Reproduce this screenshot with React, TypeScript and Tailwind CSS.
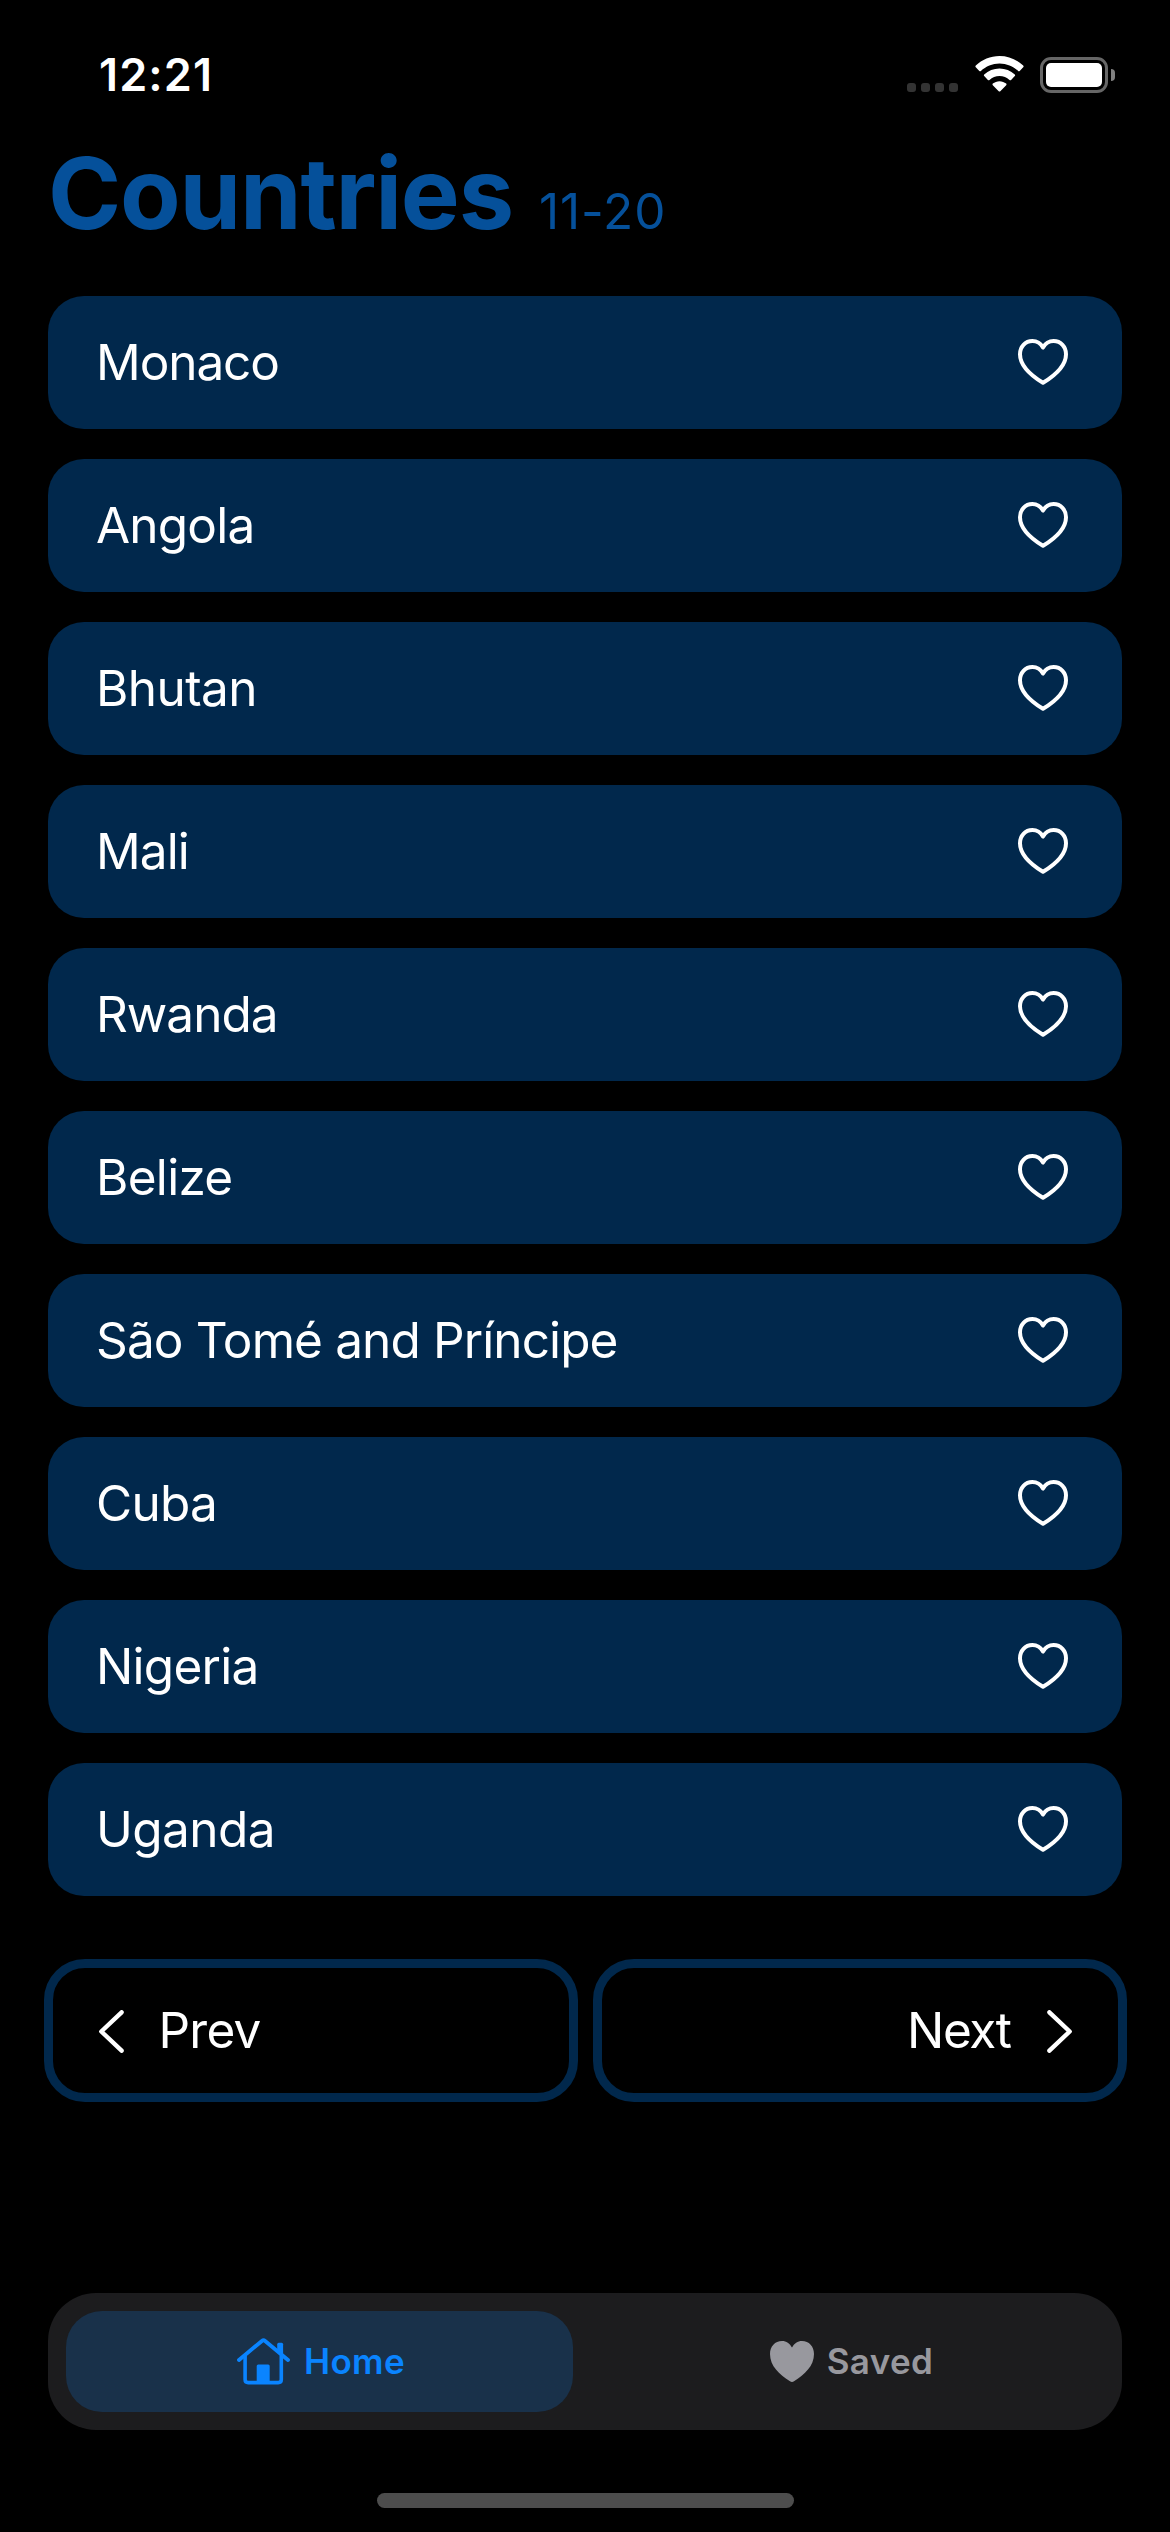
const countries: { name: string; tracking: string }[] = [
  { name: "Monaco", tracking: "tracking-[-1.08px]" },
  { name: "Angola", tracking: "tracking-[-0.8px]" },
  { name: "Bhutan", tracking: "tracking-[-0.6px]" },
  { name: "Mali", tracking: "tracking-[-0.9px]" },
  { name: "Rwanda", tracking: "tracking-[-1px]" },
  { name: "Belize", tracking: "tracking-[-0.7px]" },
  { name: "São Tomé and Príncipe", tracking: "tracking-[-0.88px]" },
  { name: "Cuba", tracking: "tracking-[-0.7px]" },
  { name: "Nigeria", tracking: "tracking-[-0.75px]" },
  { name: "Uganda", tracking: "tracking-[-0.55px]" },
];

function HeartOutline() {
  return (
    <svg className="mb-[1px] h-[46px] w-[50px]" viewBox="0 0 50 46" fill="none" stroke="currentColor" strokeWidth="4" strokeLinejoin="round">
      <path d="M25 8.6C22.6 4.4 19 2.1 14.4 2.1C7.2 2.1 2 7.7 2 15.2C2 26.6 12.6 36.2 25 43.8C37.4 36.2 48 26.6 48 15.2C48 7.7 42.8 2.1 35.6 2.1C31 2.1 27.4 4.4 25 8.6Z" />
    </svg>
  );
}

function HeartFilled() {
  return (
    <svg className="h-[41px] w-[44px]" viewBox="0 0 44 41" fill="currentColor">
      <path d="M22 6.6C19.8 2.5 16.4 0 12 0C5 0 0 5.4 0 13C0 25 9.5 33.6 19.6 40C20.6 40.7 21.3 41 22 41C22.7 41 23.4 40.7 24.4 40C34.5 33.6 44 25 44 13C44 5.4 39 0 32 0C27.6 0 24.2 2.5 22 6.6Z" />
    </svg>
  );
}

function House() {
  return (
    <svg className="h-[47px] w-[53px]" viewBox="0 0 53 47" fill="none" stroke="currentColor" strokeLinecap="round" strokeLinejoin="round">
      <path d="M2 22L24.9 2.9Q26.5 1.6 28.1 2.9L51 22" strokeWidth="3.9" />
      <path d="M8.1 18V41.5Q8.1 44.6 11.2 44.6H41.2Q44.3 44.6 44.3 41.5V18" strokeWidth="3.6" />
      <path d="M40.2 13V6.2Q40.2 4.7 41.7 4.7H44.6Q46.1 4.7 46.1 6.2V18Z" fill="currentColor" stroke="none" />
      <path d="M19.7 45V28Q19.7 26.5 21.2 26.5H31.2Q32.7 26.5 32.7 28V45Z" fill="currentColor" stroke="none" />
    </svg>
  );
}

function Wifi() {
  return (
    <svg className="h-[36px] w-[49px]" viewBox="0 0 49 36" fill="currentColor">
      <path d="M24.5 0C33.6 0 42 3.6 48.2 9.6Q49 10.4 48.2 11.2L44.7 14.9Q43.9 15.7 43.1 14.9C38.2 10.3 31.6 7.4 24.5 7.4C17.4 7.4 10.8 10.3 5.9 14.9Q5.1 15.7 4.3 14.9L.8 11.2Q0 10.4 .8 9.6C7 3.6 15.4 0 24.5 0Z" />
      <path d="M24.5 12.6C30.3 12.6 35.7 14.8 39.8 18.5Q40.6 19.3 39.8 20.1L36.1 23.9Q35.3 24.6 34.5 23.9C31.8 21.5 28.3 20 24.5 20C20.7 20 17.2 21.5 14.5 23.9Q13.7 24.6 12.9 23.9L9.2 20.1Q8.4 19.3 9.2 18.5C13.3 14.8 18.7 12.6 24.5 12.6Z" />
      <path d="M24.5 25.2C27 25.2 29.4 26.1 31.2 27.6Q32 28.4 31.2 29.2L25.3 35.2Q24.5 36 23.7 35.2L17.8 29.2Q17 28.4 17.8 27.6C19.6 26.1 22 25.2 24.5 25.2Z" />
    </svg>
  );
}

function Battery() {
  return (
    <div className="flex items-center gap-[3px]">
      <div className="h-[36px] w-[68px] rounded-[11px] border-3 border-[#666666] p-[3px]">
        <div className="h-full w-full rounded-[5px] bg-white" />
      </div>
      <div className="h-[12px] w-[4px] rounded-r-full bg-[#808080]" />
    </div>
  );
}

function StatusBar() {
  return (
    <div className="flex h-[149px] items-center justify-between pr-[55px] pl-[99px]">
      <span className="text-[45px] leading-none font-semibold tracking-[1.14px]">12:21</span>
      <div className="flex items-end">
        <div className="mr-[17px] flex gap-[5px] pb-[1px]">
          {[0, 1, 2, 3].map((dot) => (
            <span key={dot} className="h-[9px] w-[9px] rounded-[3px] bg-[#333333]" />
          ))}
        </div>
        <div className="mr-[16px] pb-[1px]"><Wifi /></div>
        <Battery />
      </div>
    </div>
  );
}

function Chevron({ direction }: { direction: "left" | "right" }) {
  return (
    <svg className="h-[43px] w-[25px]" viewBox="0 0 25 43" fill="none" stroke="currentColor" strokeWidth="4.4" strokeLinecap="round" strokeLinejoin="round">
      <path d={direction === "left" ? "M22.6 2.3L2.3 21.5L22.6 40.7" : "M2.4 2.3L22.7 21.5L2.4 40.7"} />
    </svg>
  );
}

export default function App() {
  return (
    <div className="flex h-[2532px] w-[1170px] flex-col overflow-hidden bg-black font-['Inter',sans-serif] text-white">
      <StatusBar />
      <header className="flex items-baseline gap-[26px] pl-12 text-[#05509a]">
        <h1 className="text-[99px] leading-[88px] font-bold tracking-[-1.21px]">Countries</h1>
        <span className="text-[49.5px] leading-none tracking-[0.94px]">11-20</span>
      </header>

      <ul className="mt-[59px] flex flex-col gap-[30px] px-12">
        {countries.map(({ name, tracking }) => (
          <li key={name} className="flex h-[133px] items-center justify-between rounded-[36px] bg-[#01284c] pr-[54px] pl-12">
            <span className={`pt-[1px] text-[49.5px] leading-none ${tracking}`}>{name}</span>
            <HeartOutline />
          </li>
        ))}
      </ul>

      <div className="mt-[63px] flex gap-[15px] px-[43.5px]">
        <button className="flex h-[143px] flex-1 items-center gap-[35px] rounded-[41px] border-9 border-[#01284c] pt-[1px] pl-[46px] text-[49.5px] leading-none tracking-[-0.77px]">
          <Chevron direction="left" />
          Prev
        </button>
        <button className="flex h-[143px] flex-1 items-center justify-end gap-[36px] rounded-[41px] border-9 border-[#01284c] pt-[1px] pr-[46px] text-[49.5px] leading-none tracking-[-1.44px]">
          Next
          <Chevron direction="right" />
        </button>
      </div>

      <nav className="mx-12 mt-[191px] flex h-[137px] rounded-[48px] bg-[#1c1c1e] p-[18px] text-[35px] leading-none font-semibold">
        <div className="flex h-[101px] w-[507px] items-center justify-center gap-[14px] rounded-[36px] bg-[#19314a] pl-[3px] tracking-[0.4px] text-[#0a84ff]">
          <House />
          Home
        </div>
        <div className="flex h-[101px] flex-1 items-center justify-center gap-[13px] pl-[26px] tracking-[0.4px] text-[#98989e]">
          <HeartFilled />
          Saved
        </div>
      </nav>

      <div className="mx-auto mt-[63px] h-[15px] w-[417px] rounded-full bg-[#4d4d4d]" />
    </div>
  );
}
